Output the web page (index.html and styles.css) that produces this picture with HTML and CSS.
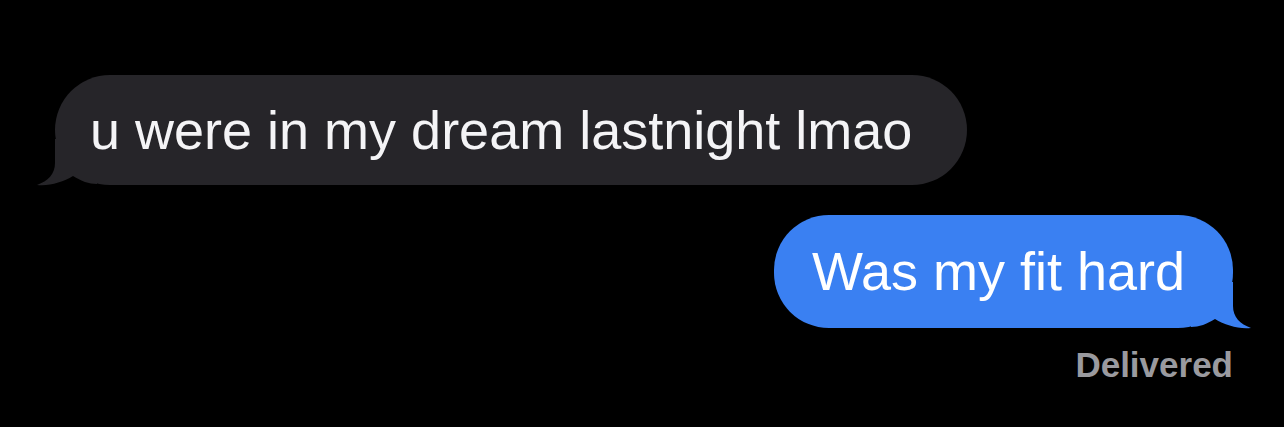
FILE: index.html
```html
<!DOCTYPE html>
<html lang="en">
<head>
<meta charset="utf-8">
<title>Messages</title>
<link rel="stylesheet" href="styles.css">
</head>
<body>
  <main class="thread">
    <div class="row row-in">
      <div class="bubble bubble-in">
        u were in my dream lastnight lmao
        <svg class="tail tail-in" viewBox="0 0 60 48" width="60" height="48" aria-hidden="true">
          <path d="M18 0 L18 24 C18 35 11 42 0 46 C12 47.5 26 43 36 37 C44 42 52 45 60 45 L60 0 Z"/>
        </svg>
      </div>
    </div>
    <div class="row row-out">
      <div class="bubble bubble-out">
        Was my fit hard
        <svg class="tail tail-out" viewBox="0 0 60 48" width="60" height="48" aria-hidden="true">
          <path d="M18 0 L18 24 C18 35 11 42 0 46 C12 47.5 26 43 36 37 C44 42 52 45 60 45 L60 0 Z"/>
        </svg>
      </div>
    </div>
    <div class="row row-out">
      <span class="status">Delivered</span>
    </div>
  </main>
</body>
</html>
```

FILE: styles.css
```css
html, body {
  margin: 0;
  padding: 0;
  background: #000;
}

body {
  width: 1284px;
  height: 427px;
  overflow: hidden;
  font-family: "Liberation Sans", Arial, sans-serif;
}

.thread {
  display: flex;
  flex-direction: column;
  padding: 75px 51px 0 55px;
}

.row {
  display: flex;
}

.row-in {
  justify-content: flex-start;
}

.row-out {
  justify-content: flex-end;
}

.bubble {
  position: relative;
  z-index: 0;
  font-size: 54px;
  line-height: 62px;
  border-radius: 55px;
  white-space: nowrap;
}

.bubble-in {
  background: #262529;
  color: #f4f4f6;
  padding: 24px 55px 24px 35px;
}

.bubble-out {
  margin-top: 30px;
  background: #3a80f2;
  color: #fff;
  padding: 25px 48px 26px 38px;
}

.tail {
  position: absolute;
  z-index: -1;
  bottom: -2px;
  display: block;
}

.tail-in {
  left: -18px;
  fill: #262529;
}

.tail-out {
  right: -18px;
  fill: #3a80f2;
  transform: scaleX(-1);
}

.status {
  margin-top: 17px;
  font-size: 35px;
  line-height: 40px;
  font-weight: bold;
  color: #9a9a9f;
}
```
